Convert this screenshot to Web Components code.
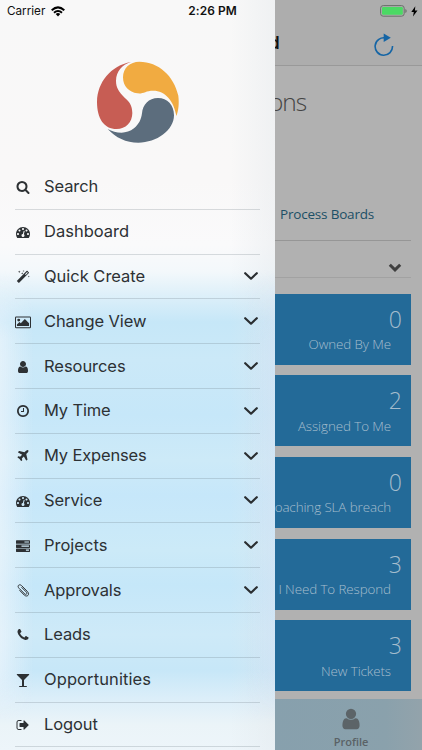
<!DOCTYPE html>
<html lang="en">
<head>
<meta charset="utf-8">
<title>Menu</title>
<style>
html,body{margin:0;height:100%;overflow:hidden}
</style>
</head>
<body>
<mobile-app></mobile-app>
<script>
const FA = {
search:'<path d="M1216 832q0-185-131.5-316.5t-316.5-131.5-316.5 131.5-131.5 316.5 131.5 316.5 316.5 131.5 316.5-131.5 131.5-316.5zm512 832q0 52-38 90t-90 38q-54 0-90-38l-343-342q-179 124-399 124-143 0-273.5-55.5t-225-150-150-225-55.5-273.5 55.5-273.5 150-225 225-150 273.5-55.5 273.5 55.5 225 150 150 225 55.5 273.5q0 220-124 399l343 343q37 37 37 90z"/>',
gauge:'<path d="M384 1152q0-53-37.5-90.5t-90.5-37.5-90.5 37.5-37.5 90.5 37.5 90.5 90.5 37.5 90.5-37.5 37.5-90.5zm192-448q0-53-37.5-90.5t-90.5-37.5-90.5 37.5-37.5 90.5 37.5 90.5 90.5 37.5 90.5-37.5 37.5-90.5zm428 481l101-382q6-26-7.5-48.5t-38.5-29.5-48 6.5-30 39.5l-101 382q-60 5-107 43.5t-63 98.5q-20 77 20 146t117 89 146-20 89-117q16-60-6-117t-72-91zm660-33q0-53-37.5-90.5t-90.5-37.5-90.5 37.5-37.5 90.5 37.5 90.5 90.5 37.5 90.5-37.5 37.5-90.5zm-640-640q0-53-37.5-90.5t-90.5-37.5-90.5 37.5-37.5 90.5 37.5 90.5 90.5 37.5 90.5-37.5 37.5-90.5zm448 192q0-53-37.5-90.5t-90.5-37.5-90.5 37.5-37.5 90.5 37.5 90.5 90.5 37.5 90.5-37.5 37.5-90.5zm320 448q0 261-141 483-19 29-54 29h-1402q-35 0-54-29-141-221-141-483 0-182 71-348t191-286 286-191 348-71 348 71 286 191 191 286 71 348z"/>',
wand:'<path fill-rule="evenodd" d="M1380 110q36-34 72 0l200 200q34 36 0 72l-1250 1250q-36 34-72 0l-200-200q-34-36 0-72zM1422 270l-270 270 95 95 270-270z"/><path d="M250 230l130-40 38-125 38 125 130 40-130 42-38 125-38-125zM650 430l110-32 32-110 32 110 110 32-110 34-32 110-32-110zM840 140l100-30 28-90 28 90 100 30-100 30-28 90-28-90zM1510 830l100-30 30-90 30 90 100 30-100 30-30 90-30-90z"/>',
image:'<path fill-rule="evenodd" d="M30 190h1732q158 0 158 158v1180q0 158-158 158h-1732q-158 0-158-158v-1180q0-158 158-158zM30 318q-30 0-30 30v1180q0 30 30 30h1732q30 0 30-30v-1180q0-30-30-30z"/><circle cx="350" cy="650" r="185"/><path d="M120 1420v-200l330-320 160 160 520-540 540 520v380z"/>',
user:'<path d="M1536 1399q0 109-62.5 187t-150.5 78h-854q-88 0-150.5-78t-62.5-187q0-85 8.5-160.5t31.5-152 58.5-131 94-89 134.5-34.5q131 128 313 128t313-128q76 0 134.5 34.5t94 89 58.5 131 31.5 152 8.5 160.5zm-256-887q0 159-112.5 271.5t-271.5 112.5-271.5-112.5-112.5-271.5 112.5-271.5 271.5-112.5 271.5 112.5 112.5 271.5z"/>',
clock:'<path d="M1024 544v448q0 14-9 23t-23 9h-320q-14 0-23-9t-9-23v-64q0-14 9-23t23-9h224v-352q0-14 9-23t23-9h64q14 0 23 9t9 23zm416 352q0-148-73-273t-198-198-273-73-273 73-198 198-73 273 73 273 198 198 273 73 273-73 198-198 73-273zm224 0q0 209-103 385.5t-279.5 279.5-385.5 103-385.5-103-279.5-279.5-103-385.5 103-385.5 279.5-279.5 385.5-103 385.5 103 279.5 279.5 103 385.5z"/>',
plane:'<path d="M1568 160q44 52 12 148t-108 172l-161 161 160 696q5 19-12 33l-128 96q-7 6-19 6-4 0-7-1-15-3-21-16l-279-508-259 259 53 194q5 17-8 31l-96 96q-9 9-23 9h-2q-15-2-24-13l-189-252-252-189q-11-7-13-23-1-13 9-25l96-97q9-9 23-9 6 0 8 1l194 53 259-259-508-279q-14-8-17-24-2-16 9-27l128-128q14-13 30-8l665 159 160-160q76-76 172-108t148 12z"/>',
tasks:'<path fill-rule="evenodd" d="M60 170h1672q60 0 60 60v330q0 60-60 60h-1672q-60 0-60-60v-330q0-60 60-60zM1080 310v150h580v-150zM60 690h1672q60 0 60 60v330q0 60-60 60h-1672q-60 0-60-60v-330q0-60 60-60zM700 830v150h960v-150zM60 1210h1672q60 0 60 60v330q0 60-60 60h-1672q-60 0-60-60v-330q0-60 60-60zM1270 1350v150h390v-150z"/>',
clip:'<path fill="none" stroke="currentColor" stroke-width="125" stroke-linecap="round" d="M740 450l560 560c220 230-20 420-190 260L390 550C80 230 440-60 720 210l760 770c330 380-60 770-430 430L480 830"/>',
phone:'<path d="M1600 1240q0 27-10 70.5t-21 68.5q-21 50-122 106-94 51-186 51-27 0-53-3.5t-57.5-12.5-47-14.5-55.5-20.5-49-18q-98-35-175-83-127-79-264-216t-216-264q-48-77-83-175-3-9-18-49t-20.5-55.5-14.5-47-12.5-57.5-3.5-53q0-92 51-186 56-101 106-122 25-11 68.5-21t70.5-10q14 0 21 3 18 6 53 76 11 19 30 54t35 63.5 31 53.5q3 4 17.5 25t21.5 35.5 7 28.5q0 20-28.5 50t-62 55-62 53-28.5 46q0 9 5 22.5t8.5 20.5 14 24 11.5 19q76 137 174 235t235 174q2 1 19 11.5t24 14 20.5 8.5 22.5 5q18 0 46-28.5t53-62 55-62 50-28.5q14 0 28.5 7t35.5 21.5 25 17.5q25 15 53.5 31t63.5 35 54 30q70 35 76 53 3 7 3 21z"/>',
glass:'<path d="M1699 186q0 35-43 78l-632 632v768h320q26 0 45 19t19 45-19 45-45 19h-896q-26 0-45-19t-19-45 19-45 45-19h320v-768l-632-632q-43-43-43-78 0-23 18-36.5t38-17.5 43-4h1408q23 0 43 4t38 17.5 18 36.5z"/>',
logout:'<path d="M704 1440q0 4 1 20t.5 26.5-3 23.5-10 19.5-20.5 6.5h-320q-119 0-203.5-84.5t-84.5-203.5v-704q0-119 84.5-203.5t203.5-84.5h320q13 0 22.5 9.5t9.5 22.5q0 4 1 20t.5 26.5-3 23.5-10 19.5-20.5 6.5h-320q-66 0-113 47t-47 113v704q0 66 47 113t113 47h312l11.5 1 11.5 3 8 5.5 7 9 2 13.5zm928-544q0 26-19 45l-544 544q-19 19-45 19t-45-19-19-45v-288h-448q-26 0-45-19t-19-45v-384q0-26 19-45t45-19h448v-288q0-26 19-45t45-19 45 19l544 544q19 19 19 45z"/>'
};

function define(name, render) {
  customElements.define(name, class extends HTMLElement {
    connectedCallback() {
      if (!this.shadowRoot) this.attachShadow({mode:'open'}).innerHTML = render(this);
    }
  });
}

define('fa-icon', el => `
<style>:host{display:block;width:14px;height:14px;flex:none}svg{display:block;width:100%;height:100%;overflow:visible}</style>
<svg viewBox="0 0 1792 1792" fill="currentColor">${FA[el.getAttribute('name')]}</svg>`);

define('menu-row', el => `
<style>
:host{display:flex;align-items:center;height:43.8px;border-bottom:1px solid rgba(90,105,115,.22);color:#2d3134;
font:400 16.5px/22px Inter,"Liberation Sans",sans-serif;letter-spacing:var(--ls,-.1px)}
fa-icon{margin:1px 0 0 .5px}
.t{margin:-1px 0 0 14.5px;flex:1;white-space:nowrap}
.c{width:16px;height:10px;margin-right:1px}
</style>
<fa-icon name="${el.getAttribute('icon')}"></fa-icon><span class="t"><slot></slot></span>
${el.hasAttribute('expand') ? '<svg class="c" viewBox="0 0 16 10"><path d="M2.2 2.2 8 7.7 13.8 2.2" fill="none" stroke="#2a2e31" stroke-width="2.2" stroke-linecap="round" stroke-linejoin="round"/></svg>' : ''}`);

define('brand-logo', () => `
<style>:host{display:block;width:96px;height:94px}svg{display:block}</style>
<svg width="96" height="94" viewBox="0 0 288 282">
<path fill="#f1ab41" d="M259 183C252 138 225 107 190 107C166 107 161 117 142 115C117 112 99 94 99 67C99 39 120 20 148 20C206 20 252 63 265 122C268 148 265 168 259 183Z"/>
<path fill="#c75d54" d="M123 21C62 32 22 82 21 140C21 190 42 222 80 222C107 222 127 202 127 174C127 151 118 140 104 128C86 109 78 98 78 77C79 49 95 30 123 21Z"/>
<path fill="#5c6d7d" d="M53 222C76 234 108 240 132 220C147 207 153 195 156 175C158 149 176 129 204 129C232 129 252 150 252 181C252 226 200 263 145 263C108 263 77 248 53 222Z"/>
</svg>`);

define('side-menu', () => `
<style>
:host{display:flex;flex-direction:column;position:relative;width:275px;flex:none;height:750px;box-sizing:border-box;overflow:hidden;padding-top:55px;
background:linear-gradient(90deg,rgba(225,230,234,0) 230px,rgba(225,230,234,.4) 275px),linear-gradient(180deg,#f8f8f8 0,#f9f8f8 180px,#fafafb 245px,#f3f8fb 272px,#d9eef9 300px,#c6e7f8 322px,#cbe9f8 360px,#c6e7f9 415px,#cdeaf8 460px,#c6e7fa 495px,#cceaf8 550px,#c5e7f9 585px,#ceeaf8 635px,#c7e7f8 670px,#deeff9 702px,#ebf4f8 725px,#edf5fa 750px)}
:host::before{content:"";position:absolute;inset:0;background:linear-gradient(90deg,rgba(243,247,252,.6),rgba(243,247,252,0) 34px,rgba(205,225,248,0) 245px,rgba(205,225,248,.4));
-webkit-mask-image:linear-gradient(180deg,transparent 270px,#000 340px,#000 670px,transparent 720px);mask-image:linear-gradient(180deg,transparent 270px,#000 340px,#000 670px,transparent 720px)}
brand-logo{margin-left:90px;flex:none}
nav{position:relative;margin:16px 15px 0 15px}
</style>
<brand-logo></brand-logo>
<nav>
<menu-row icon="search">Search</menu-row>
<menu-row icon="gauge" style="--ls:0px">Dashboard</menu-row>
<menu-row icon="wand" style="--ls:-.02px" expand>Quick Create</menu-row>
<menu-row icon="image" expand>Change View</menu-row>
<menu-row icon="user" style="--ls:-.05px" expand>Resources</menu-row>
<menu-row icon="clock" style="--ls:-.15px" expand>My Time</menu-row>
<menu-row icon="plane" style="--ls:-.16px" expand>My Expenses</menu-row>
<menu-row icon="gauge" expand>Service</menu-row>
<menu-row icon="tasks" style="--ls:0px" expand>Projects</menu-row>
<menu-row icon="clip" expand>Approvals</menu-row>
<menu-row icon="phone">Leads</menu-row>
<menu-row icon="glass" style="--ls:.1px">Opportunities</menu-row>
<menu-row icon="logout">Logout</menu-row>
</nav>`);

define('stat-tile', el => `
<style>
:host{display:flex;flex-direction:column;align-items:flex-end;height:71px;margin-bottom:10.6px;box-sizing:border-box;background:#236a98;color:#a5bdcd;font-family:"Open Sans",sans-serif;font-weight:300;white-space:nowrap}
b{font-weight:300;font-size:23px;line-height:30px;margin:10px 9px 0 0}
span{font-size:13.4px;line-height:18px;letter-spacing:-.1px;margin:1.4px 20px 0 0}
</style>
<b>${el.getAttribute('value')}</b><span><slot></slot></span>`);

define('dashboard-view', () => `
<style>
:host{display:flex;flex-direction:column;flex:1;min-width:0;height:750px;overflow:hidden;background:#b1b1b1;font-family:"Open Sans",sans-serif}
header{display:flex;justify-content:space-between;height:66px;box-sizing:border-box;border-bottom:1px solid #999;background:#adadad;flex:none}
header b{font:600 17px/20px Inter,sans-serif;color:#111;margin:33px 0 0 -6px}
header svg{margin:33px 28px 0 0}
h1{font-weight:300;font-size:24.5px;line-height:34px;letter-spacing:-1px;color:#444;margin:19px 0 0 -6px}
.tab{font-size:13.5px;line-height:20px;letter-spacing:-.19px;color:#1c4f66;margin:85px 11px 0 0;padding:0 0 15.5px 5px;border-bottom:1px solid #969696;white-space:nowrap}
.sel{height:37.3px;box-sizing:border-box;display:flex;justify-content:flex-end;align-items:flex-end;border-bottom:1px solid #a2a2a2;margin:0 11px 16px 0}
.sel svg{margin:0 9.5px 4px 0}
.tiles{margin-right:11px;height:405px}
footer{flex:1;display:flex;flex-direction:column;align-items:center;background:linear-gradient(90deg,#87a0ad,#8aa1ac 75%,#93a3ab);color:#5a6266;font-weight:600;font-size:11px;line-height:14px;padding-top:8px;box-sizing:border-box}
footer div{display:flex;flex-direction:column;align-items:center;margin-left:5px}
footer fa-icon{width:24px;height:24px;color:#5c6468;margin-bottom:4px}
</style>
<header><b>d</b><svg width="20" height="24" viewBox="0 0 20 24"><path d="M11.7 5A8.7 8.7 0 1 0 18.5 13" fill="none" stroke="#1565a5" stroke-width="1.6"/><path d="M9.7 .5 16.8 4.8 9.7 9z" fill="#1565a5"/></svg></header>
<h1>ons</h1>
<div class="tab">Process Boards</div>
<div class="sel"><svg width="14" height="10" viewBox="0 0 14 10"><path d="M1.8 1.8 7 6.9 12.2 1.8" fill="none" stroke="#404040" stroke-width="3"/></svg></div>
<div class="tiles">
<stat-tile value="0">Owned By Me</stat-tile>
<stat-tile value="2">Assigned To Me</stat-tile>
<stat-tile value="0">oaching SLA breach</stat-tile>
<stat-tile value="3">I Need To Respond</stat-tile>
<stat-tile value="3">New Tickets</stat-tile>
</div>
<footer><div><fa-icon name="user"></fa-icon>Profile</div></footer>`);

define('status-bar', () => `
<style>
:host{position:absolute;left:0;top:0;width:422px;height:22px;display:grid;grid-template-columns:1fr auto 1fr;align-items:center;box-sizing:border-box;padding:0 4px 0 7px;color:#111;font:400 11.7px/14px Inter,sans-serif}
div{display:flex;align-items:center;gap:6px}
.r{justify-content:flex-end;gap:4px}
b{font-weight:600;font-size:11.9px;letter-spacing:.08px}
</style>
<div><span>Carrier</span><svg width="14" height="11" viewBox="0 0 14 11"><g fill="none" stroke="#000" stroke-width="2"><path d="M.7 4.2Q7-1.4 13.3 4.2"/><path d="M3 6.7Q7 3.2 11 6.7"/></g><path d="M4.7 8Q7 6.2 9.3 8L7 10.4z"/></svg></div>
<b>2:26 PM</b>
<div class="r"><svg width="27" height="12" viewBox="0 0 27 12"><rect x=".6" y=".6" width="23.6" height="10.6" rx="2.6" fill="none" stroke="#697069"/><rect x="2" y="2" width="20.8" height="7.8" rx="1.2" fill="#4bd964"/><path d="M25.3 4v4q1.4-.6 1.4-2t-1.4-2z" fill="#697069"/></svg><svg width="7" height="11" viewBox="0 0 7 11"><path d="M4.3.2.3 6h2.5L2 10.6 6.5 4.6H3.9z"/></svg></div>`);

define('mobile-app', () => `
<style>:host{display:flex;position:relative;width:422px;height:750px;overflow:hidden}</style>
<side-menu></side-menu><dashboard-view></dashboard-view><status-bar></status-bar>`);
</script>
</body>
</html>
